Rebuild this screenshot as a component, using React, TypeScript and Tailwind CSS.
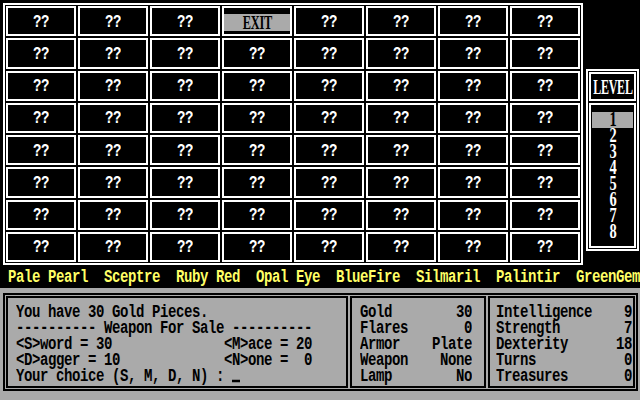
import React from 'react'

const dos = "font-['Liberation_Mono',monospace] font-bold text-[14px] tracking-[-0.4px] leading-[16px]"
const serif = "font-['Liberation_Serif',serif] font-bold"

const gems = ' Pale Pearl  Sceptre  Ruby Red  Opal Eye  BlueFire  Silmaril  Palintir  GreenGem'

function Line({ children, className = '' }: { children: React.ReactNode; className?: string }) {
  return (
    <div className={`h-[16px] whitespace-pre scale-y-[1.25] ${className}`}>{children}</div>
  )
}

function Cell({ exit }: { exit?: boolean }) {
  return (
    <div className="border-2 border-white bg-black flex items-center justify-center">
      {exit ? (
        <div className="w-full h-[17px] mt-[3px] bg-[#aaaaaa] flex items-center justify-center">
          <span className={`${serif} inline-block text-[19px] leading-[17px] text-black scale-x-[0.65]`}>EXIT</span>
        </div>
      ) : (
        <Line className="text-white leading-[16px] mt-[1px]">??</Line>
      )}
    </div>
  )
}

export default function App() {
  const cells = Array.from({ length: 64 }, (_, i) => i)
  const mid = [
    ['Gold', '30'],
    ['Flares', '0'],
    ['Armor', 'Plate'],
    ['Weapon', 'None'],
    ['Lamp', 'No'],
  ]
  const stats = [
    ['Intelligence', '9'],
    ['Strength', '7'],
    ['Dexterity', '18'],
    ['Turns', '0'],
    ['Treasures', '0'],
  ]

  return (
    <div className={`w-[640px] h-[400px] overflow-hidden bg-black ${dos}`}>
      {/* map + level selector */}
      <div className="h-[266px] flex pl-[3px] pt-[3px]">
        <div className="w-[580px] h-[262px] border-2 border-white p-[1px] grid grid-cols-8 grid-rows-8 gap-[2px]">
          {cells.map((i) => (
            <Cell key={i} exit={i === 3} />
          ))}
        </div>
        <div className="ml-[3px] mt-[66px] w-[53px] h-[182px] border-2 border-white p-[1px] flex flex-col gap-[2px]">
          <div className="h-[29px] border-2 border-white flex items-center justify-center">
            <span className={`${serif} inline-block text-white text-[20px] leading-[20px] scale-x-[0.6]`}>LEVEL</span>
          </div>
          <div className="flex-1 border-2 border-white pt-[7px] px-[1px]">
            {[1, 2, 3, 4, 5, 6, 7, 8].map((n) => (
              <div
                key={n}
                className={`h-[16px] flex items-center justify-center ${n === 1 ? 'bg-[#aaaaaa] text-black' : 'text-white'}`}
              >
                <span className={`${serif} inline-block text-[16px] leading-[16px] scale-x-[0.9] scale-y-[1.25]`}>{n}</span>
              </div>
            ))}
          </div>
        </div>
      </div>

      {/* treasures */}
      <div className="h-[22px] flex items-center text-[#ffff66]">
        <Line>{gems}</Line>
      </div>

      {/* status panels */}
      <div className="h-[112px] bg-[#aaaaaa] pt-[5px] pl-[3px] text-black">
        <div className="w-[635px] h-[98px] border-2 border-black p-[1px] flex gap-[2px]">
          <div className="w-[342px] border-2 border-black pl-[8px] pt-[6px]">
            <Line>You have 30 Gold Pieces.</Line>
            <Line>---------- Weapon For Sale ----------</Line>
            <Line>{'<S>word = 30              <M>ace = 20'}</Line>
            <Line>{'<D>agger = 10             <N>one =  0'}</Line>
            <Line className="flex items-end">
              <span>Your choice (S, M, D, N) : </span>
              <span className="inline-block w-[8px] h-[2px] bg-black mb-[3px]" />
            </Line>
          </div>
          <div className="w-[136px] border-2 border-black pl-[8px] pt-[6px]">
            {mid.map(([k, v]) => (
              <Line key={k} className="w-[112px] flex justify-between">
                <span>{k}</span>
                <span>{v}</span>
              </Line>
            ))}
          </div>
          <div className="flex-1 border-2 border-black pl-[6px] pt-[6px]">
            {stats.map(([k, v]) => (
              <Line key={k} className="w-[136px] flex justify-between">
                <span>{k}</span>
                <span>{v}</span>
              </Line>
            ))}
          </div>
        </div>
      </div>
    </div>
  )
}
